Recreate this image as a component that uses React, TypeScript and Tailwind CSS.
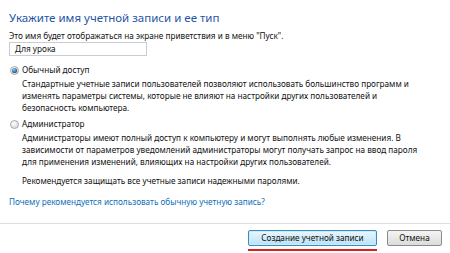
import React from 'react'

function Radio({ checked }: { checked?: boolean }) {
  return (
    <svg width="9" height="9" viewBox="0 0 9 9" className="shrink-0">
      <defs>
        <radialGradient id={checked ? 'rg1' : 'rg2'} cx="0.4" cy="0.35" r="0.7">
          <stop offset="0" stopColor="#ffffff" />
          <stop offset="1" stopColor="#d6d6d6" />
        </radialGradient>
        <radialGradient id="dot" cx="0.4" cy="0.35" r="0.7">
          <stop offset="0" stopColor="#8cc8f2" />
          <stop offset="1" stopColor="#1a4a88" />
        </radialGradient>
      </defs>
      <circle cx="4.5" cy="4.5" r="4" fill={`url(#${checked ? 'rg1' : 'rg2'})`} stroke="#a3a3a3" strokeWidth="0.9" />
      {checked && <circle cx="4.5" cy="4.5" r="2.6" fill="url(#dot)" />}
    </svg>
  )
}

export default function App() {
  return (
    <div
      className="w-[450px] h-[253px] bg-white overflow-hidden text-[#111] text-[8.2px] leading-[12px] whitespace-nowrap"
      style={{ fontFamily: '"Noto Sans", "Open Sans", sans-serif' }}
    >
      <div className="pl-[9px]">
        <h1 className="pt-[10px] text-[11.5px] leading-[16px] text-[#1f55a6]">
          Укажите имя учетной записи и ее тип
        </h1>
        <p className="mt-[4px]">
          Это имя будет отображаться на экране приветствия и в меню "Пуск".
        </p>
        <div className="w-[138px] h-[14px] border border-[#c9ccd2] flex items-center pl-[5px]">
          Для урока
        </div>

        <div className="mt-[8px] flex items-center gap-[3px] pl-[1px]">
          <Radio checked />
          <span>Обычный доступ</span>
        </div>
        <div className="mt-[2px] pl-[13px]">
          <div>Стандартные учетные записи пользователей позволяют использовать большинство программ и</div>
          <div>изменять параметры системы, которые не влияют на настройки других пользователей и</div>
          <div>безопасность компьютера.</div>
        </div>

        <div className="mt-[4px] flex items-center gap-[3px] pl-[1px]">
          <Radio />
          <span>Администратор</span>
        </div>
        <div className="mt-[2px] pl-[13px]">
          <div>Администраторы имеют полный доступ к компьютеру и могут выполнять любые изменения. В</div>
          <div>зависимости от параметров уведомлений администраторы могут получать запрос на ввод пароля</div>
          <div>для применения изменений, влияющих на настройки других пользователей.</div>
        </div>
        <div className="mt-[7px] pl-[13px]">
          Рекомендуется защищать все учетные записи надежными паролями.
        </div>
        <div className="mt-[9px] text-[#0d6fb8]">
          Почему рекомендуется использовать обычную учетную запись?
        </div>
      </div>

      <div className="mt-[15px] h-px bg-[#dedede]" />

      <div className="mt-[6px] flex justify-end pr-[8px] gap-[10px] items-start">
        <div className="flex flex-col items-stretch">
          <button className="w-[129px] h-[16px] rounded-[2px] border border-[#3c8bc0] bg-gradient-to-b from-[#eaf6fd] to-[#b9e2f7] leading-[12px] text-[#111] shadow-[inset_0_0_0_1px_#c9ecfb]">
            Создание учетной записи
          </button>
          <div className="mt-[3px] h-[2px] bg-[#d9201c]" />
        </div>
        <button className="w-[55px] h-[16px] rounded-[2px] border border-[#8a8a8a] bg-gradient-to-b from-[#f4f4f4] to-[#dcdcdc] leading-[12px] text-[#111]">
          Отмена
        </button>
      </div>
    </div>
  )
}
